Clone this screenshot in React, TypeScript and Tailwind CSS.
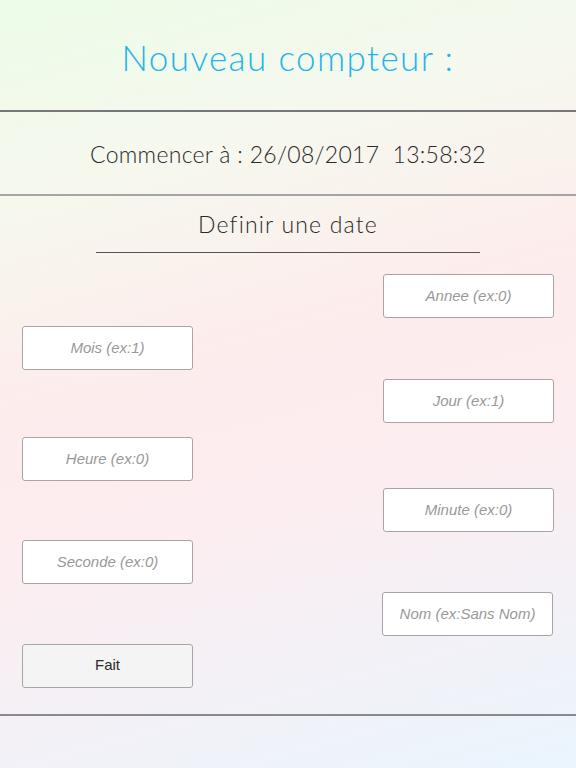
import { useState } from 'react'

// =============================================================================
// TYPES
// =============================================================================

interface FieldProps {
  placeholder: string
  side: 'left' | 'right'
  className?: string
}

// =============================================================================
// FIELDS
// =============================================================================

function Field({ placeholder, side, className = '' }: FieldProps) {
  const [value, setValue] = useState('')

  return (
    <input
      value={value}
      onChange={(e) => setValue(e.target.value)}
      placeholder={placeholder}
      className={`w-[171px] h-[44px] shrink-0 rounded-[3px] border border-[#aca4a4] bg-white text-center text-[15px] text-[#333] outline-none placeholder:italic placeholder:text-[#999] ${
        side === 'left' ? 'self-start' : 'self-end'
      } ${className}`}
      style={{ fontFamily: '"Liberation Sans", Arial, sans-serif' }}
    />
  )
}

// =============================================================================
// APP
// =============================================================================

export default function App() {
  const heading = { fontFamily: 'Lato, "Open Sans", sans-serif' }

  return (
    <div className="w-full h-[768px] flex flex-col overflow-hidden bg-[linear-gradient(165deg,#ecfce8_0%,#f6f8ee_22%,#fdecec_45%,#fcedf0_62%,#eaf5fd_100%)]">
      {/* Title */}
      <div className="h-[110px] flex items-center justify-center pt-[5px]" style={heading}>
        <h1 className="text-[35px] font-light text-[#1eb5e9] tracking-[1.4px]">Nouveau compteur :</h1>
      </div>
      <div className="h-[1.5px] bg-[#777]" />

      {/* Start date */}
      <div className="h-[82px] flex items-center justify-center pt-[4px]" style={heading}>
        <p className="text-[23px] font-light text-[#2a2a2a] tracking-[0.3px] whitespace-pre">Commencer à : 26/08/2017  13:58:32</p>
      </div>
      <div className="h-[2px] bg-[#a5a5a5]" />

      {/* Define a date */}
      <div className="flex flex-col items-center pt-[12px]" style={heading}>
        <p className="text-[23px] font-light text-[#2a2a2a] leading-[32px] tracking-[1.2px]">Definir une date</p>
        <div className="mt-[12px] w-[384px] h-px bg-[#555]" />
      </div>

      <div className="flex flex-col px-[22px]">
        <Field placeholder="Annee (ex:0)" side="right" className="mt-[21px]" />
        <Field placeholder="Mois (ex:1)" side="left" className="mt-[8px]" />
        <Field placeholder="Jour (ex:1)" side="right" className="mt-[9px]" />
        <Field placeholder="Heure (ex:0)" side="left" className="mt-[14px]" />
        <Field placeholder="Minute (ex:0)" side="right" className="mt-[7px]" />
        <Field placeholder="Seconde (ex:0)" side="left" className="mt-[8px]" />
        <Field placeholder="Nom (ex:Sans Nom)" side="right" className="mt-[8px] mr-px" />
        <button
          className="mt-[8px] w-[171px] h-[44px] self-start rounded-[3px] border border-[#aca4a4] bg-[#f4f4f4] text-[15px] text-[#2b2b2b]"
          style={{ fontFamily: '"Liberation Sans", Arial, sans-serif' }}
        >
          Fait
        </button>
      </div>

      <div className="mt-[26px] h-[2px] bg-[#8a8a8a]" />
    </div>
  )
}
